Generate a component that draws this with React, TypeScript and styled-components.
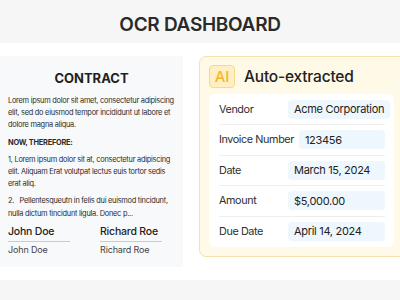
import { createGlobalStyle } from "styled-components";
import styled from "styled-components";

const GlobalStyle = createGlobalStyle`
  html, body {
    margin: 0;
    padding: 0;
    background: #ffffff;
  }
  body {
    font-family: Inter, "Noto Sans", "Liberation Sans", sans-serif;
    color: #222;
  }
`;

const Page = styled.div`
  width: 400px;
  height: 300px;
  display: flex;
  flex-direction: column;
  overflow: hidden;
  background: #ffffff;
`;

const Header = styled.header`
  height: 43px;
  box-sizing: border-box;
  padding-top: 5px;
  flex: 0 0 auto;
  background: #f6f6f6;
  display: flex;
  align-items: center;
  justify-content: center;
`;

const Title = styled.h1`
  margin: 0;
  font-size: 19px;
  font-weight: 600;
  color: #2a2a2a;
  letter-spacing: -0.3px;
`;

const Main = styled.main`
  flex: 1 1 auto;
  display: flex;
  align-items: flex-start;
  gap: 16px;
  padding-top: 13px;
  overflow: hidden;
`;

const Footer = styled.footer`
  height: 20px;
  flex: 0 0 auto;
  background: #f6f6f6;
`;

/* ---------- contract ---------- */

const Contract = styled.section`
  width: 183px;
  height: 211px;
  flex: 0 0 auto;
  box-sizing: border-box;
  padding: 12px 4px 0 8px;
  background: #f8f9fb;
`;

const ContractTitle = styled.h2`
  margin: 0 0 7px;
  text-align: center;
  padding-right: 4px;
  font-size: 13px;
  line-height: 20px;
  font-weight: 700;
  color: #1f1f1f;
`;

const Para = styled.p<{ $bold?: boolean }>`
  margin: 0 0 5px;
  font-size: 7.4px;
  line-height: 12.2px;
  letter-spacing: -0.25px;
  font-weight: ${(p) => (p.$bold ? 700 : 400)};
  color: #2b2b2b;
`;

const Line = styled.span`
  display: block;
  white-space: pre;
`;

const Signatures = styled.div`
  display: flex;
  gap: 30px;
  margin-top: 1px;
`;

const Signature = styled.div`
  width: 62px;
  display: flex;
  flex-direction: column;
`;

const SignName = styled.span`
  font-size: 10.5px;
  line-height: 14px;
  font-weight: 500;
  letter-spacing: -0.2px;
  color: #222;
  padding-bottom: 2px;
  border-bottom: 1px solid #c9cbd0;
  white-space: nowrap;
`;

const SignPrinted = styled.span`
  margin-top: 1px;
  font-size: 9px;
  line-height: 13px;
  letter-spacing: -0.15px;
  color: #444;
  white-space: nowrap;
`;

/* ---------- extracted ---------- */

const Extracted = styled.section`
  width: 210px;
  flex: 0 0 auto;
  box-sizing: border-box;
  padding: 8px 14px 9px 9px;
  background: #fffae8;
  border: 1px solid #f5e2ac;
  border-radius: 7px;
`;

const ExtractedHeader = styled.div`
  display: flex;
  align-items: center;
  gap: 9px;
  height: 23px;
  margin-bottom: 6px;
`;

const AiBadge = styled.span`
  width: 26px;
  height: 23px;
  box-sizing: border-box;
  display: flex;
  align-items: center;
  justify-content: center;
  background: #ffefc2;
  border: 1px solid #f6d98c;
  border-radius: 4px;
  color: #f3b52c;
  font-size: 15px;
  font-weight: 500;
`;

const ExtractedTitle = styled.h3`
  margin: 0;
  font-size: 15.5px;
  font-weight: 500;
  letter-spacing: -0.2px;
  color: #222;
`;

const Fields = styled.div`
  background: #ffffff;
  border-radius: 6px;
  padding: 0.5px 9px 0.5px 10px;
`;

const Field = styled.div`
  height: 29.5px;
  display: flex;
  align-items: center;
  gap: 5px;
  border-bottom: 1px solid #eeeeee;

  &:last-child {
    border-bottom: none;
  }
`;

const Label = styled.span`
  min-width: 64px;
  font-size: 10.8px;
  letter-spacing: -0.4px;
  color: #2e2e2e;
  white-space: nowrap;
`;

const Value = styled.span`
  flex: 1;
  height: 19px;
  display: flex;
  align-items: center;
  padding: 0 6px;
  background: #eef7fd;
  border-radius: 4px;
  font-size: 11px;
  letter-spacing: -0.3px;
  color: #222;
  white-space: nowrap;
`;

const paragraphs: { bold?: boolean; lines: string[] }[] = [
  {
    lines: [
      "Lorem ipsum dolor sit amet, consectetur adipiscing",
      "elit, sed do eiusmod tempor incididunt ut labore et",
      "dolore magna aliqua.",
    ],
  },
  { bold: true, lines: ["NOW, THEREFORE:"] },
  {
    lines: [
      "1, Lorem ipsum dolor sit at, consectetur adipiscing",
      "elit. Aliquam Erat volutpat lectus euis tortor sedis",
      "erat aliq.",
    ],
  },
  {
    lines: [
      "2.   Pellentesqueutn in felis dui euismod tincidunt,",
      "nulla dictum tincidunt ligula. Donec p...",
    ],
  },
];

const fields = [
  { label: "Vendor", value: "Acme Corporation" },
  { label: "Invoice Number", value: "123456" },
  { label: "Date", value: "March 15, 2024" },
  { label: "Amount", value: "$5,000.00" },
  { label: "Due Date", value: "April 14, 2024" },
];

const App = () => {
  return (
    <Page>
      <GlobalStyle />
      <Header>
        <Title>OCR DASHBOARD</Title>
      </Header>
      <Main>
        <Contract>
          <ContractTitle>CONTRACT</ContractTitle>
          {paragraphs.map((p, i) => (
            <Para key={i} $bold={p.bold}>
              {p.lines.map((l) => (
                <Line key={l}>{l}</Line>
              ))}
            </Para>
          ))}
          <Signatures>
            <Signature>
              <SignName>John Doe</SignName>
              <SignPrinted>John Doe</SignPrinted>
            </Signature>
            <Signature>
              <SignName>Richard Roe</SignName>
              <SignPrinted>Richard Roe</SignPrinted>
            </Signature>
          </Signatures>
        </Contract>
        <Extracted>
          <ExtractedHeader>
            <AiBadge>AI</AiBadge>
            <ExtractedTitle>Auto-extracted</ExtractedTitle>
          </ExtractedHeader>
          <Fields>
            {fields.map((f) => (
              <Field key={f.label}>
                <Label>{f.label}</Label>
                <Value>{f.value}</Value>
              </Field>
            ))}
          </Fields>
        </Extracted>
      </Main>
      <Footer />
    </Page>
  );
};

export default App;
